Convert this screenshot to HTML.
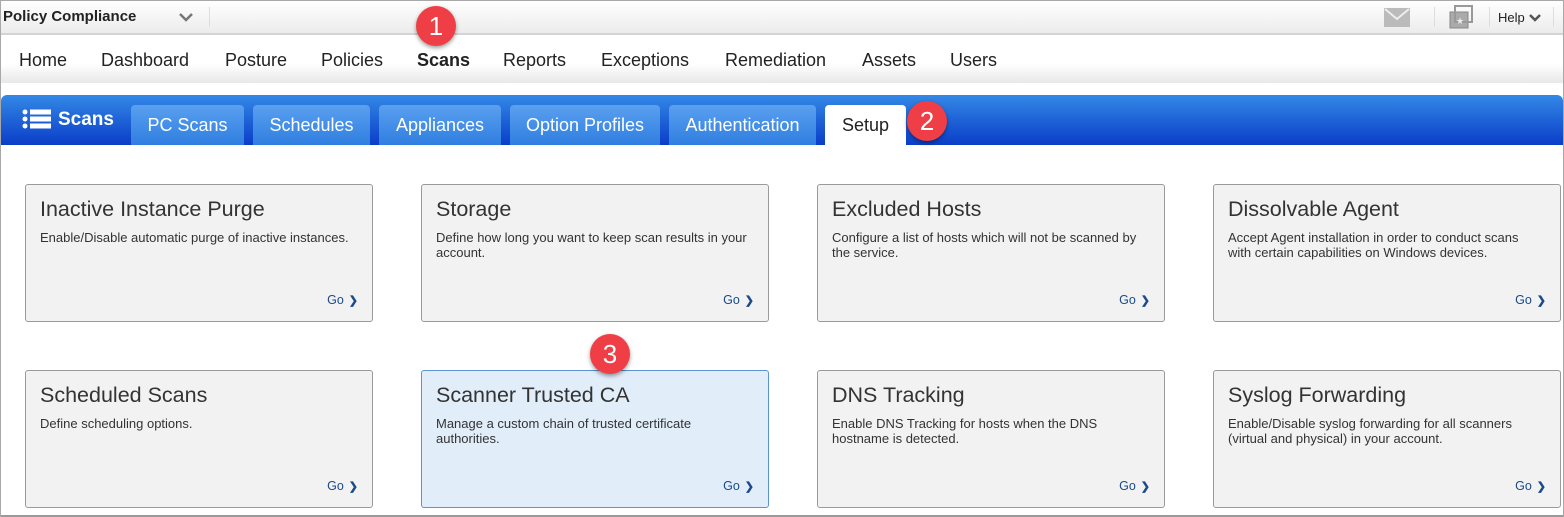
<!DOCTYPE html>
<html><head><style>
*{box-sizing:border-box;margin:0;padding:0}
body{width:1564px;height:517px;overflow:hidden;background:#fff;font-family:"Liberation Sans",Arial,sans-serif;position:relative}
.frame{position:absolute;left:0;top:0;width:1564px;height:517px;border:1px solid #a8a8a8;border-bottom:none;pointer-events:none;z-index:10}
.top{position:absolute;left:0;top:0;width:1564px;height:35px;background:linear-gradient(#fff,#ececec);border-bottom:2px solid #d4d4d4}
.nav{position:absolute;left:0;top:35px;width:1564px;height:48px;background:linear-gradient(#fff 60%,#e8e8e8)}
.nav span{position:absolute;top:15px;font-size:18px;color:#222}
.bar{position:absolute;left:1px;top:95px;width:1562px;height:50px;background:linear-gradient(#3388e6,#0a3ec8);border-radius:6px 6px 0 0}
.tab{position:absolute;top:105px;height:40px;background:linear-gradient(#5aa0f0,#2f7ee0);color:#fff;font-size:18px;text-align:center;line-height:40px;border-radius:4px 4px 0 0}
.tab.sel{background:#fff;color:#222}
.card{position:absolute;width:348px;height:138px;background:#f2f2f2;border:1px solid #9a9a9a;border-radius:3px}
.card.hl{background:#e1edf9;border-color:#5b93d3}
.card h2{position:absolute;left:14px;top:12px;font-size:21.5px;font-weight:normal;color:#333}
.card p{position:absolute;left:14px;top:45px;width:330px;white-space:nowrap;font-size:13px;line-height:15px;color:#333}
.card .go{position:absolute;right:14px;bottom:14px;font-size:12.5px;color:#1a4a8a}
.go b{font-size:11px;margin-left:5px;color:#1a4a8a}
.badge{position:absolute;width:40px;height:40px;border-radius:50%;background:#ef3e45;color:#fff;font-size:26px;text-align:center;line-height:40px;box-shadow:0 2px 4px rgba(0,0,0,.4);z-index:5}
</style></head><body>
<div class="top">
<div style="position:absolute;left:3px;top:8px;font-size:15px;font-weight:bold;color:#222">Policy Compliance</div>
<svg style="position:absolute;left:179px;top:13px" width="14" height="9"><path d="M1 1l6 6 6-6" stroke="#777" stroke-width="2.5" fill="none"/></svg>
<div style="position:absolute;left:209px;top:7px;width:1px;height:20px;background:#ddd"></div>
<svg style="position:absolute;left:1384px;top:8px" width="26" height="19"><rect width="26" height="19" fill="#bbb"/><path d="M1 1l12 10 12-10" stroke="#eee" stroke-width="2" fill="none"/></svg>
<div style="position:absolute;left:1434px;top:7px;width:1px;height:20px;background:#ddd"></div>
<svg style="position:absolute;left:1448px;top:4px" width="26" height="26"><rect x="2" y="8" width="18" height="16" fill="#aaa" stroke="#888"/><rect x="7" y="2" width="17" height="16" fill="none" stroke="#999" stroke-width="2"/><text x="8" y="20" font-size="9" fill="#eee">★</text></svg>
<div style="position:absolute;left:1489px;top:7px;width:1px;height:20px;background:#ddd"></div>
<div style="position:absolute;left:1498px;top:10px;font-size:13px;color:#222">Help</div>
<svg style="position:absolute;left:1529px;top:14px" width="12" height="8"><path d="M1 1l5 5 5-5" stroke="#555" stroke-width="2.5" fill="none"/></svg>
<div style="position:absolute;left:1553px;top:7px;width:1px;height:20px;background:#ddd"></div>
</div>
<div class="nav">
<span style="left:19px">Home</span><span style="left:101px">Dashboard</span><span style="left:225px">Posture</span><span style="left:321px">Policies</span><span style="left:417px;font-weight:bold">Scans</span><span style="left:503px">Reports</span><span style="left:601px">Exceptions</span><span style="left:725px">Remediation</span><span style="left:862px">Assets</span><span style="left:950px">Users</span>
</div>
<div class="badge" style="left:416px;top:6px">1</div>
<div class="bar">
<svg style="position:absolute;left:21px;top:14px" width="30" height="20"><g fill="#fff"><circle cx="3" cy="3" r="2.5"/><circle cx="3" cy="10" r="2.5"/><circle cx="3" cy="17" r="2.5"/><rect x="8" y="0.5" width="21" height="5"/><rect x="8" y="7.5" width="21" height="5"/><rect x="8" y="14.5" width="21" height="5"/></g></svg>
<div style="position:absolute;left:57px;top:14px;color:#fff;font-size:19px;font-weight:bold">Scans</div>
</div>
<div class="tab" style="left:131px;width:113px">PC Scans</div>
<div class="tab" style="left:253px;width:117px">Schedules</div>
<div class="tab" style="left:379px;width:122px">Appliances</div>
<div class="tab" style="left:510px;width:150px">Option Profiles</div>
<div class="tab" style="left:669px;width:147px">Authentication</div>
<div class="tab sel" style="left:825px;width:81px">Setup</div>
<div class="badge" style="left:907px;top:101px">2</div>

<div class="card" style="left:25px;top:184px"><h2>Inactive Instance Purge</h2><p>Enable/Disable automatic purge of inactive instances.</p><div class="go">Go<b>❯</b></div></div>
<div class="card" style="left:421px;top:184px"><h2>Storage</h2><p>Define how long you want to keep scan results in your<br>account.</p><div class="go">Go<b>❯</b></div></div>
<div class="card" style="left:817px;top:184px"><h2>Excluded Hosts</h2><p>Configure a list of hosts which will not be scanned by<br>the service.</p><div class="go">Go<b>❯</b></div></div>
<div class="card" style="left:1213px;top:184px"><h2>Dissolvable Agent</h2><p>Accept Agent installation in order to conduct scans<br>with certain capabilities on Windows devices.</p><div class="go">Go<b>❯</b></div></div>
<div class="card" style="left:25px;top:370px"><h2>Scheduled Scans</h2><p>Define scheduling options.</p><div class="go">Go<b>❯</b></div></div>
<div class="card hl" style="left:421px;top:370px"><h2>Scanner Trusted CA</h2><p>Manage a custom chain of trusted certificate<br>authorities.</p><div class="go">Go<b>❯</b></div></div>
<div class="card" style="left:817px;top:370px"><h2>DNS Tracking</h2><p>Enable DNS Tracking for hosts when the DNS<br>hostname is detected.</p><div class="go">Go<b>❯</b></div></div>
<div class="card" style="left:1213px;top:370px"><h2>Syslog Forwarding</h2><p>Enable/Disable syslog forwarding for all scanners<br>(virtual and physical) in your account.</p><div class="go">Go<b>❯</b></div></div>
<div class="badge" style="left:590px;top:334px">3</div>
<div style="position:absolute;left:0;top:515px;width:1564px;height:2px;background:#999"></div>
<div class="frame"></div>
</body></html>
